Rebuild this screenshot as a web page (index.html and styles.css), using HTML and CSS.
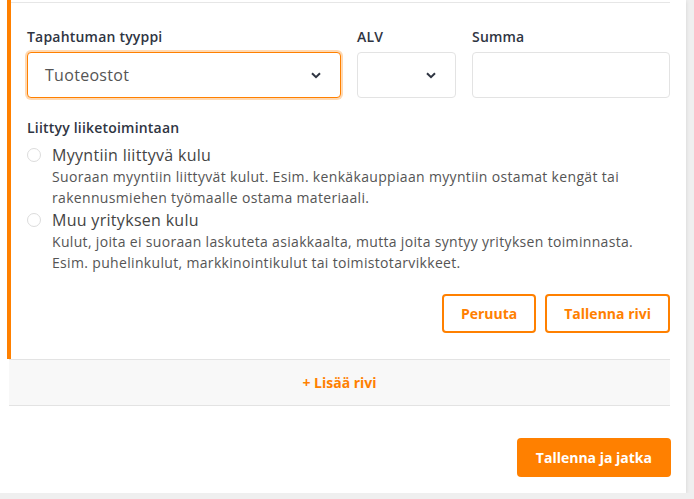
FILE: index.html
```html
<!DOCTYPE html>
<html lang="fi">
<head>
  <meta charset="UTF-8" />
  <meta name="viewport" content="width=device-width, initial-scale=1.0"/>
  <title>Tapahtuman rivit</title>
  <link rel="stylesheet" href="styles.css">
</head>
<body>

  <div class="card">
    <div class="row">
      <div class="row-form">
        <div class="fields">
          <div class="field">
            <label class="field-label" for="type">Tapahtuman tyyppi</label>
            <div class="select select-focus" id="type">
              <span>Tuoteostot</span>
              <svg class="chevron" width="10" height="7" viewBox="0 0 10 7"><path d="M1 1.2 L5 5.2 L9 1.2" fill="none" stroke="#2f3542" stroke-width="2"/></svg>
            </div>
          </div>
          <div class="field">
            <label class="field-label" for="alv">ALV</label>
            <div class="select" id="alv">
              <span></span>
              <svg class="chevron" width="10" height="7" viewBox="0 0 10 7"><path d="M1 1.2 L5 5.2 L9 1.2" fill="none" stroke="#2f3542" stroke-width="2"/></svg>
            </div>
          </div>
          <div class="field">
            <label class="field-label" for="sum">Summa</label>
            <input class="input" type="text" id="sum" />
          </div>
        </div>

        <div class="group">
          <div class="field-label">Liittyy liiketoimintaan</div>
          <label class="option">
            <span class="radio"></span>
            <span class="option-text">
              <span class="option-title">Myyntiin liittyvä kulu</span>
              <span class="option-desc">Suoraan myyntiin liittyvät kulut. Esim. kenkäkauppiaan myyntiin ostamat kengät tai rakennusmiehen työmaalle ostama materiaali.</span>
            </span>
          </label>
          <label class="option">
            <span class="radio"></span>
            <span class="option-text">
              <span class="option-title">Muu yrityksen kulu</span>
              <span class="option-desc">Kulut, joita ei suoraan laskuteta asiakkaalta, mutta joita syntyy yrityksen toiminnasta. Esim. puhelinkulut, markkinointikulut tai toimistotarvikkeet.</span>
            </span>
          </label>
        </div>

        <div class="row-actions">
          <button class="btn-outline">Peruuta</button>
          <button class="btn-outline">Tallenna rivi</button>
        </div>
      </div>
    </div>

    <div class="add-row">+ Lisää rivi</div>

    <div class="footer">
      <button class="btn-primary">Tallenna ja jatka</button>
    </div>
  </div>

</body>
</html>
```

FILE: styles.css
```css
body {
  margin: 0;
  background-color: #efefef;
  font-family: "Open Sans", Arial, sans-serif;
  color: #555;
}

.card {
  width: 663px;
  background-color: white;
  padding: 0 16px 16px 7px;
  box-shadow: 0 1px 4px rgba(0, 0, 0, 0.12);
}

.row {
  border-left: 4px solid #ff8000;
  padding-top: 2px;
}

.row-form {
  border-top: 1px solid #e6e6e6;
  padding: 24px 0 26px 16px;
}

.fields {
  display: grid;
  grid-template-columns: 314px 99px 198px;
  column-gap: 16px;
}

.field-label {
  display: block;
  font-size: 14px;
  font-weight: 600;
  line-height: 20px;
  letter-spacing: 0.2px;
  color: #2f3542;
  margin-bottom: 5px;
}

.select,
.input {
  height: 46px;
  box-sizing: border-box;
  border: 1px solid #e3e3e3;
  border-radius: 4px;
  background: white;
}

.select {
  display: flex;
  align-items: center;
  justify-content: space-between;
  padding: 0 19px 0 17px;
  font-size: 16px;
  letter-spacing: 0.3px;
  color: #555;
}

.select-focus {
  border-color: #ff8000;
  box-shadow: 0 0 0 2px rgba(255, 128, 0, 0.3);
}

.input {
  width: 100%;
  font: inherit;
}

.group {
  margin-top: 20px;
}

.group .field-label {
  margin-bottom: 6px;
}

.option {
  display: flex;
  gap: 11px;
  margin-bottom: 1px;
}

.radio {
  flex: none;
  width: 14px;
  height: 14px;
  box-sizing: border-box;
  border: 1px solid #dcdcdc;
  border-radius: 50%;
  margin-top: 4px;
}

.option-text {
  display: flex;
  flex-direction: column;
}

.option-title {
  font-size: 16px;
  line-height: 22px;
  letter-spacing: 0.3px;
  color: #444;
}

.option-desc {
  font-size: 14px;
  line-height: 21px;
  letter-spacing: 0.33px;
  color: #555;
}

.row-actions {
  display: flex;
  justify-content: flex-end;
  gap: 9px;
  margin-top: 21px;
}

.btn-outline {
  height: 39px;
  padding: 0 17px;
  background: white;
  border: 2px solid #ff8000;
  border-radius: 4px;
  color: #ff8000;
  font-family: "Open Sans", Arial, sans-serif;
  font-size: 14px;
  font-weight: 700;
  cursor: pointer;
}

.add-row {
  margin-left: 2px;
  height: 45px;
  line-height: 45px;
  border-top: 1px solid #e3e3e3;
  border-bottom: 1px solid #e3e3e3;
  background-color: #f8f8f8;
  text-align: center;
  color: #ff8000;
  font-size: 14px;
  font-weight: 700;
}

.footer {
  display: flex;
  justify-content: flex-end;
  margin-top: 32px;
}

.btn-primary {
  height: 39px;
  padding: 0 19px;
  margin-right: -1px;
  background-color: #ff8000;
  border: none;
  border-radius: 4px;
  color: white;
  font-family: "Open Sans", Arial, sans-serif;
  font-size: 14px;
  font-weight: 700;
  cursor: pointer;
}
```
